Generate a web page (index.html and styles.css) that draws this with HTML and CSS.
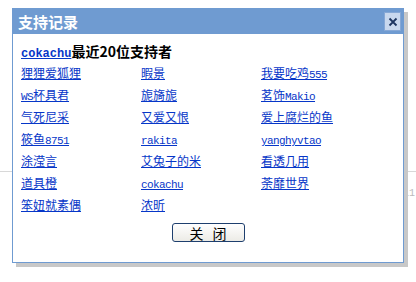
FILE: index.html
```html
<!DOCTYPE html>
<html lang="zh-CN">
<head>
    <meta charset="UTF-8">
    <title>支持记录</title>
    <link rel="stylesheet" href="styles.css">
</head>
<body>
    <div class="page">
        <div class="page-rule"></div>
        <div class="page-note">11</div>
    </div>

    <div class="dialog">
        <div class="dialog-title">
            <span>支持记录</span>
            <a class="dialog-x" href="#">
                <svg width="10" height="10" viewBox="0 0 10 10"><path d="M1.5 1.5 L8.5 8.5 M8.5 1.5 L1.5 8.5" stroke="#1d3560" stroke-width="1.8"/></svg>
            </a>
        </div>
        <div class="dialog-body">
            <div class="heading"><a href="#" class="en">cokachu</a>最近20位支持者</div>
            <div class="fans">
                <a href="#">狸狸爱狐狸</a>
                <a href="#">暇景</a>
                <a href="#">我要吃鸡<span class="en">555</span></a>
                <a href="#"><span class="en">WS</span>杯具君</a>
                <a href="#">旎旖旎</a>
                <a href="#">茗饰<span class="en">Makio</span></a>
                <a href="#">气死尼采</a>
                <a href="#">又爱又恨</a>
                <a href="#">爱上腐烂的鱼</a>
                <a href="#">筱鱼<span class="en">8751</span></a>
                <a href="#"><span class="en">rakita</span></a>
                <a href="#"><span class="en">yanghyvtao</span></a>
                <a href="#">涂滢言</a>
                <a href="#">艾兔子的米</a>
                <a href="#">看透几用</a>
                <a href="#">道具橙</a>
                <a href="#"><span class="en">cokachu</span></a>
                <a href="#">荼靡世界</a>
                <a href="#">笨妞就素偶</a>
                <a href="#">浓昕</a>
            </div>
            <div class="actions">
                <button class="btn">关 闭</button>
            </div>
        </div>
    </div>
</body>
</html>
```

FILE: styles.css
```css
body {
    margin: 0;
    background: #fff;
    font-family: "Noto Sans CJK SC", sans-serif;
    font-size: 12px;
}
.page {
    position: relative;
    height: 282px;
    overflow: hidden;
}
.page-rule {
    position: absolute;
    left: 0;
    right: 0;
    top: 171px;
    border-top: 1px solid #d8d8d8;
}
.page-note {
    position: absolute;
    left: 403px;
    top: 188px;
    color: #bbb;
    font-family: "Liberation Mono", monospace;
    font-size: 10px;
}
.dialog {
    position: absolute;
    left: 12px;
    top: 8px;
    width: 390px;
    height: 253px;
    background: #fff;
    border: 1px solid #6f9bd1;
    box-shadow: 4px 4px 0 #c8c8c8;
}
.dialog-title {
    height: 25px;
    background: #6f9bd1;
    color: #fff;
    font-size: 15px;
    font-weight: bold;
    line-height: 24px;
    padding-left: 5px;
    display: flex;
    justify-content: space-between;
    align-items: center;
}
.dialog-x {
    width: 15px;
    height: 17px;
    margin-right: 2px;
    background: #c8d8ee;
    border: 1px solid #86a8d6;
    display: flex;
    align-items: center;
    justify-content: center;
}
.dialog-body {
    padding: 6px 8px 0 8px;
}
.heading {
    height: 22px;
    line-height: 22px;
    font-size: 14px;
    font-weight: bold;
    color: #000;
}
.heading .en {
    font-size: 12px;
    letter-spacing: 0;
}
a {
    color: #0636c8;
    text-decoration: underline;
}
.en {
    font-family: "Liberation Mono", monospace;
    font-size: 11px;
    letter-spacing: -0.6px;
}
.fans {
    display: grid;
    grid-template-columns: 120px 120px 120px;
    grid-auto-rows: 22px;
}
.fans a {
    justify-self: start;
    line-height: 22px;
}
.actions {
    margin-top: 7px;
    text-align: center;
}
.btn {
    width: 73px;
    height: 19px;
    padding: 0;
    border: 1px solid #1e3f6e;
    border-radius: 3px;
    background: linear-gradient(#ffffff, #ecebe6);
    font-family: "Noto Sans CJK SC", sans-serif;
    font-size: 14px;
    line-height: 16px;
    word-spacing: 6px;
    color: #000;
}
```
